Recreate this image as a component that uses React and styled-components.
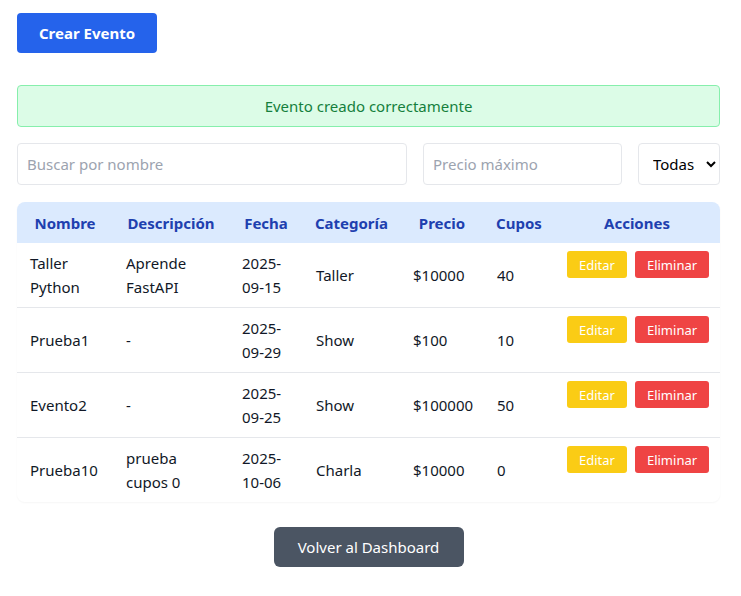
import styled, { createGlobalStyle } from 'styled-components';

const GlobalStyle = createGlobalStyle`
  body {
    margin: 0;
    font-family: 'Noto Sans', 'Open Sans', sans-serif;
    color: #111827;
    background: #ffffff;
  }
  * {
    box-sizing: border-box;
  }
`;

const Page = styled.div`
  width: 741px;
  padding: 13px 21px 24px 17px;
`;

const CreateBtn = styled.button`
  width: 140px;
  height: 40px;
  border: none;
  border-radius: 4px;
  background: #2563eb;
  color: #fff;
  font-family: inherit;
  font-size: 15px;
  font-weight: 700;
  cursor: pointer;
`;

const Alert = styled.div`
  margin-top: 32px;
  height: 42px;
  display: flex;
  align-items: center;
  justify-content: center;
  background: #dcfce7;
  border: 1px solid #86efac;
  border-radius: 4px;
  color: #15803d;
  font-size: 15px;
`;

const Filters = styled.div`
  margin-top: 16px;
  display: flex;
  gap: 16px;
`;

const Field = styled.input`
  width: ${(p) => p.$w}px;
  height: 42px;
  padding: 0 9px;
  border: 1px solid #e5e7eb;
  border-radius: 4px;
  font-family: inherit;
  font-size: 15px;
  color: #111827;
  outline: none;
  &::placeholder {
    color: #9ca3af;
  }
`;

const Select = styled.select`
  width: 82px;
  height: 42px;
  padding: 0 6px 0 10px;
  border: 1px solid #e5e7eb;
  border-radius: 4px;
  background: #fff;
  font-family: inherit;
  font-size: 15px;
  color: #000;
`;

const TableWrap = styled.div`
  margin-top: 17px;
  border-radius: 8px;
  overflow: hidden;
  box-shadow: 0 1px 2px rgba(0, 0, 0, 0.04);
`;

const Table = styled.table`
  width: 703px;
  border-collapse: collapse;
  table-layout: fixed;
`;

const Th = styled.th`
  height: 41px;
  padding: 0 8px;
  background: #dbeafe;
  color: #1e40af;
  font-size: 15px;
  font-weight: 700;
  text-align: center;
`;

const Row = styled.tr`
  border-top: ${(p) => (p.$first ? 'none' : '1px solid #e5e7eb')};
`;

const Td = styled.td`
  height: 64px;
  padding: 8px 12px 8px 13px;
  font-size: 15px;
  line-height: 24px;
  vertical-align: middle;
  text-align: left;
`;

const ActionsTd = styled(Td)`
  vertical-align: top;
`;

const Actions = styled.div`
  display: flex;
  gap: 8px;
`;

const SmallBtn = styled.button`
  height: 27px;
  padding: 0 12px;
  border: none;
  border-radius: 3px;
  background: ${(p) => p.$bg};
  color: #fff;
  font-family: inherit;
  font-size: 13px;
  cursor: pointer;
`;

const Footer = styled.div`
  margin-top: 25px;
  display: flex;
  justify-content: center;
`;

const BackBtn = styled.button`
  width: 190px;
  height: 40px;
  border: none;
  border-radius: 6px;
  background: #4b5563;
  color: #fff;
  font-family: inherit;
  font-size: 15px;
  cursor: pointer;
`;

const columns = [
  { label: 'Nombre', w: 96 },
  { label: 'Descripción', w: 116 },
  { label: 'Fecha', w: 74 },
  { label: 'Categoría', w: 97 },
  { label: 'Precio', w: 84 },
  { label: 'Cupos', w: 70 },
  { label: 'Acciones', w: 166 },
];

const eventos = [
  { nombre: 'Taller Python', desc: 'Aprende FastAPI', fecha: '2025-09-15', cat: 'Taller', precio: '$10000', cupos: 40 },
  { nombre: 'Prueba1', desc: '-', fecha: '2025-09-29', cat: 'Show', precio: '$100', cupos: 10 },
  { nombre: 'Evento2', desc: '-', fecha: '2025-09-25', cat: 'Show', precio: '$100000', cupos: 50 },
  { nombre: 'Prueba10', desc: 'prueba cupos 0', fecha: '2025-10-06', cat: 'Charla', precio: '$10000', cupos: 0 },
];

const App = () => {
  return (
    <Page>
      <GlobalStyle />
      <CreateBtn>Crear Evento</CreateBtn>

      <Alert>Evento creado correctamente</Alert>

      <Filters>
        <Field $w={390} placeholder="Buscar por nombre" />
        <Field $w={199} placeholder="Precio máximo" />
        <Select defaultValue="todas">
          <option value="todas">Todas</option>
          <option value="taller">Taller</option>
          <option value="show">Show</option>
          <option value="charla">Charla</option>
        </Select>
      </Filters>

      <TableWrap>
        <Table>
          <colgroup>
            {columns.map((c) => (
              <col key={c.label} style={{ width: c.w }} />
            ))}
          </colgroup>
          <thead>
            <tr>
              {columns.map((c) => (
                <Th key={c.label}>{c.label}</Th>
              ))}
            </tr>
          </thead>
          <tbody>
            {eventos.map((ev, i) => (
              <Row key={ev.nombre} $first={i === 0}>
                <Td>{ev.nombre}</Td>
                <Td>{ev.desc}</Td>
                <Td>
                  {ev.fecha.slice(0, 5)}
                  <br />
                  {ev.fecha.slice(5)}
                </Td>
                <Td>{ev.cat}</Td>
                <Td>{ev.precio}</Td>
                <Td>{ev.cupos}</Td>
                <ActionsTd>
                  <Actions>
                    <SmallBtn $bg="#facc15">Editar</SmallBtn>
                    <SmallBtn $bg="#ef4444">Eliminar</SmallBtn>
                  </Actions>
                </ActionsTd>
              </Row>
            ))}
          </tbody>
        </Table>
      </TableWrap>

      <Footer>
        <BackBtn>Volver al Dashboard</BackBtn>
      </Footer>
    </Page>
  );
};

export default App;
